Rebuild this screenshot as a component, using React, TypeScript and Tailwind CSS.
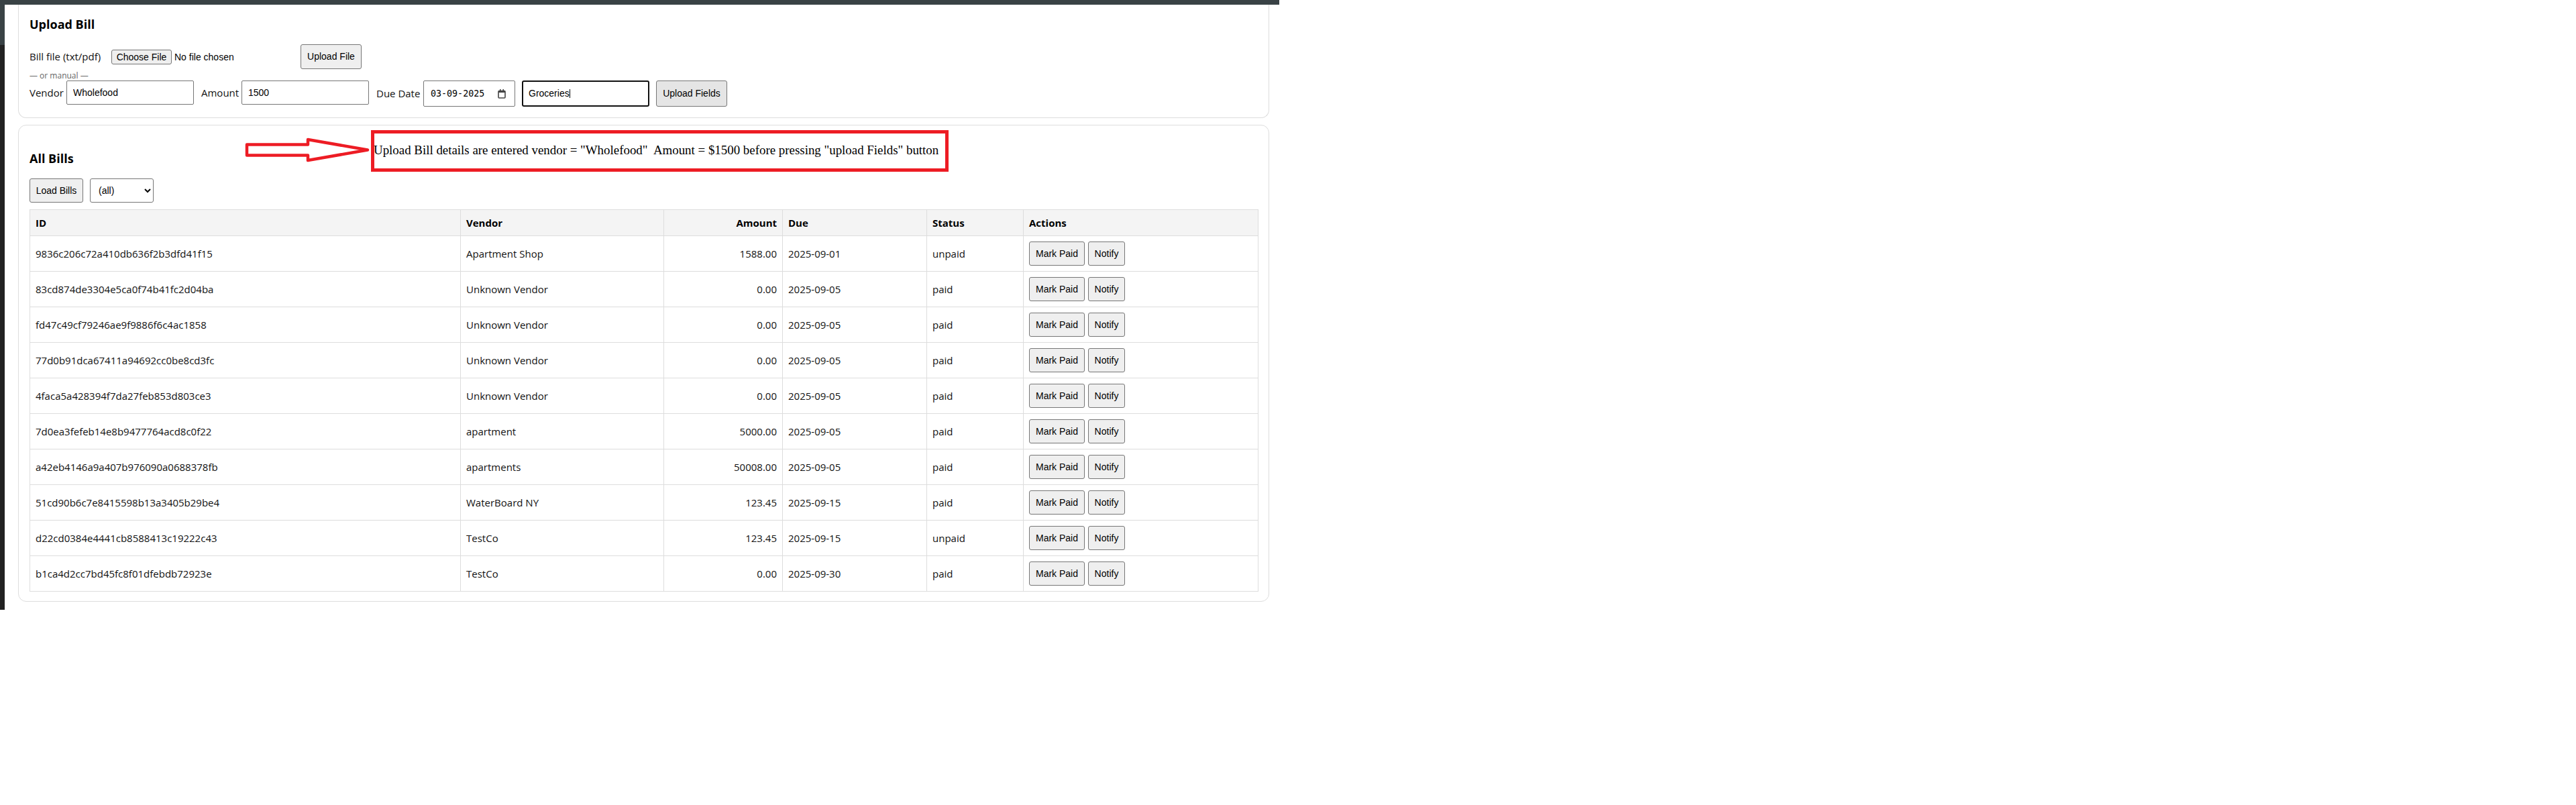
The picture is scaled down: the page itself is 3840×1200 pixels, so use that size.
const bills = [
  { id: "9836c206c72a410db636f2b3dfd41f15", vendor: "Apartment Shop", amount: "1588.00", due: "2025-09-01", status: "unpaid" },
  { id: "83cd874de3304e5ca0f74b41fc2d04ba", vendor: "Unknown Vendor", amount: "0.00", due: "2025-09-05", status: "paid" },
  { id: "fd47c49cf79246ae9f9886f6c4ac1858", vendor: "Unknown Vendor", amount: "0.00", due: "2025-09-05", status: "paid" },
  { id: "77d0b91dca67411a94692cc0be8cd3fc", vendor: "Unknown Vendor", amount: "0.00", due: "2025-09-05", status: "paid" },
  { id: "4faca5a428394f7da27feb853d803ce3", vendor: "Unknown Vendor", amount: "0.00", due: "2025-09-05", status: "paid" },
  { id: "7d0ea3fefeb14e8b9477764acd8c0f22", vendor: "apartment", amount: "5000.00", due: "2025-09-05", status: "paid" },
  { id: "a42eb4146a9a407b976090a0688378fb", vendor: "apartments", amount: "50008.00", due: "2025-09-05", status: "paid" },
  { id: "51cd90b6c7e8415598b13a3405b29be4", vendor: "WaterBoard NY", amount: "123.45", due: "2025-09-15", status: "paid" },
  { id: "d22cd0384e4441cb8588413c19222c43", vendor: "TestCo", amount: "123.45", due: "2025-09-15", status: "unpaid" },
  { id: "b1ca4d2cc7bd45fc8f01dfebdb72923e", vendor: "TestCo", amount: "0.00", due: "2025-09-30", status: "paid" },
];

const btn =
  "border border-[#767676] rounded-[3px] text-[14px] font-['Liberation_Sans',sans-serif] text-black";
const field =
  "h-[36px] w-[190px] border border-[#767676] rounded-[2px] bg-white pl-[9px] text-[14px] font-['Liberation_Sans',sans-serif] text-black";

const App = () => {
  return (
    <div className="w-[1907px] h-[909px] pt-[7px] pl-[7px] bg-[linear-gradient(#394245_67px,#222222_67px)] font-['Open_Sans',sans-serif] text-[15px] text-[#111]">
      <div className="h-full bg-white pl-[20px] pr-[15px]">
        {/* Upload card */}
        <section className="h-[169px] border border-t-0 border-[#dddddd] rounded-b-[12px] px-[16px] pt-[16px]">
          <h3 className="h-[26px] leading-[26px] text-[18px] font-bold text-black">Upload Bill</h3>
          <div className="mt-[17px] flex items-center h-[37px]">
            <label className="w-[122px]">Bill file (txt/pdf)</label>
            <input
              type="file"
              className="w-[253px] text-[14px] font-['Liberation_Sans',sans-serif] text-black file:w-[90px] file:h-[22px] file:bg-[#efefef] file:border file:border-solid file:border-[#767676] file:rounded-[3px] file:mr-[4px] file:text-black"
            />
            <button className={`${btn} bg-[#efefef] ml-[29px] w-[91px] h-[37px]`}>Upload File</button>
          </div>
          <div className="mt-[2px] h-[15px] leading-[15px] text-[12px] text-[#666666]">— or manual —</div>
          <div className="flex items-start">
            <label className="w-[55px] leading-[36px]">Vendor</label>
            <input className={field} defaultValue="Wholefood" />
            <label className="ml-[11px] w-[60px] leading-[36px]">Amount</label>
            <input className={field} defaultValue="1500" />
            <label className="ml-[11px] w-[70px] leading-[38px]">Due Date</label>
            <div className="h-[39px] w-[137px] flex items-center justify-between border border-[#767676] rounded-[2px] pl-[10px] pr-[13px] font-['DejaVu_Sans_Mono',monospace] text-[13.33px] text-black">
              <span>03-09-2025</span>
              <svg width="12" height="14" viewBox="0 0 12 14" fill="none">
                <rect x="1" y="2.5" width="10" height="10.5" rx="1" stroke="#444" strokeWidth="1.6" />
                <rect x="1" y="2" width="10" height="3" fill="#444" />
                <rect x="3" y="0" width="1.6" height="3" fill="#444" />
                <rect x="7.4" y="0" width="1.6" height="3" fill="#444" />
              </svg>
            </div>
            <div className="ml-[10px] h-[39px] w-[190px] flex items-center border-2 border-[#101010] rounded-[3px] pl-[8px] text-[14px] font-['Liberation_Sans',sans-serif] text-black">
              <span>Groceries</span>
              <span className="w-px h-[13px] bg-black" />
            </div>
            <button className={`${btn} bg-[#e5e5e5] ml-[10px] w-[106px] h-[39px]`}>Upload Fields</button>
          </div>
        </section>

        {/* Bills card */}
        <section className="relative mt-[10px] h-[711px] border border-[#dddddd] rounded-[12px] px-[16px] pt-[16px]">
          <svg className="absolute left-[337px] top-[18px]" width="188" height="38" viewBox="0 0 188 38" fill="white">
            <polygon
              points="3,10.5 94,10.5 94,3 183,18.5 94,34 94,26.5 3,26.5"
              stroke="#ed1c24"
              strokeWidth="4.5"
              strokeLinejoin="round"
            />
          </svg>
          <div className="absolute left-[525px] top-[7px] w-[861px] h-[62px] border-[5px] border-[#ed1c24] flex items-center bg-white">
            <span className="-ml-[1px] -mt-[2px] whitespace-pre text-[18.9px] text-black font-['Liberation_Serif',serif]">
              Upload Bill details are entered vendor = "Wholefood"  Amount = $1500 before pressing "upload Fields" button
            </span>
          </div>

          <h3 className="mt-[20px] h-[26px] leading-[26px] text-[18px] font-bold text-black">All Bills</h3>
          <div className="mt-[17px] flex gap-[10px] mb-[10px]">
            <button className={`${btn} bg-[#efefef] w-[80px] h-[36px]`}>Load Bills</button>
            <select className="w-[95px] h-[36px] border border-[#767676] rounded-[3px] bg-white pl-[8px] text-[14px] font-['Liberation_Sans',sans-serif] text-black">
              <option>(all)</option>
            </select>
          </div>

          <table className="table-fixed border-collapse w-[1831px]">
            <colgroup>
              <col className="w-[642px]" />
              <col className="w-[303px]" />
              <col className="w-[177px]" />
              <col className="w-[215px]" />
              <col className="w-[144px]" />
              <col className="w-[350px]" />
            </colgroup>
            <thead>
              <tr className="h-[39px] bg-[#f4f4f4] text-black">
                <th className="border border-[#dddddd] px-[8px] text-left font-bold">ID</th>
                <th className="border border-[#dddddd] px-[8px] text-left font-bold">Vendor</th>
                <th className="border border-[#dddddd] px-[8px] text-right font-bold">Amount</th>
                <th className="border border-[#dddddd] px-[8px] text-left font-bold">Due</th>
                <th className="border border-[#dddddd] px-[8px] text-left font-bold">Status</th>
                <th className="border border-[#dddddd] px-[8px] text-left font-bold">Actions</th>
              </tr>
            </thead>
            <tbody>
              {bills.map((bill) => (
                <tr key={bill.id} className="h-[53px]">
                  <td className="border border-[#dddddd] px-[8px]">{bill.id}</td>
                  <td className="border border-[#dddddd] px-[8px]">{bill.vendor}</td>
                  <td className="border border-[#dddddd] px-[8px] text-right">{bill.amount}</td>
                  <td className="border border-[#dddddd] px-[8px]">{bill.due}</td>
                  <td className="border border-[#dddddd] px-[8px]">{bill.status}</td>
                  <td className="border border-[#dddddd] px-[8px]">
                    <div className="flex gap-[5px]">
                      <button className={`${btn} bg-[#efefef] w-[83px] h-[36px]`}>Mark Paid</button>
                      <button className={`${btn} bg-[#efefef] w-[55px] h-[36px]`}>Notify</button>
                    </div>
                  </td>
                </tr>
              ))}
            </tbody>
          </table>
        </section>
      </div>
    </div>
  );
};

export default App;
